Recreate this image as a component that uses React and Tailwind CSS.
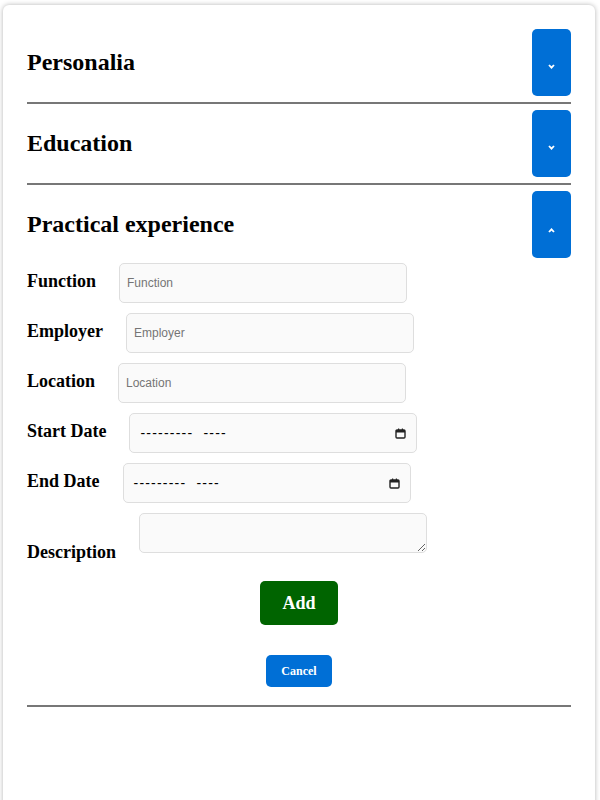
import { useState } from 'react';

const serif = { fontFamily: '"Liberation Serif", "Times New Roman", serif' };

function Chevron({ up }) {
  return (
    <svg
      width="7"
      height="5"
      viewBox="0 0 7 5"
      className={up ? 'mt-[12px]' : 'mt-[8px]'}
    >
      <path
        d={up ? 'M1 4 L3.5 1.3 L6 4' : 'M1 1 L3.5 3.7 L6 1'}
        fill="none"
        stroke="white"
        strokeWidth="1.8"
      />
    </svg>
  );
}

function Section({ title, open, onToggle, children }) {
  return (
    <div>
      <div className="flex items-center justify-between">
        <h2 className="text-[24px] font-bold text-black mb-[2px]">{title}</h2>
        <button
          onClick={onToggle}
          className="w-[39px] h-[67px] rounded-[5px] bg-[#006fd6] flex items-center justify-center"
        >
          <Chevron up={open} />
        </button>
      </div>
      {open && children}
      <div className="h-[2px] bg-[#777777] my-[6px]" />
    </div>
  );
}

function CalendarIcon() {
  return (
    <svg width="11" height="11" viewBox="0 0 11 11">
      <rect x="1" y="2" width="9" height="8" rx="1" fill="none" stroke="#222" strokeWidth="1.4" />
      <rect x="1" y="2" width="9" height="2.5" fill="#222" />
      <rect x="3" y="0.5" width="1.2" height="2" fill="#222" />
      <rect x="6.8" y="0.5" width="1.2" height="2" fill="#222" />
    </svg>
  );
}

const sans = { fontFamily: '"Liberation Sans", Arial, sans-serif' };

const inputCls =
  'w-[288px] h-[40px] rounded-[5px] border border-[#dedede] bg-[#fafafa] px-[7px] text-[12px] text-black placeholder:text-[#757575] outline-none';

function TextRow({ label }) {
  return (
    <div className="flex items-center gap-[23px]">
      <label className="text-[18px] font-bold mb-[3px]">{label}</label>
      <input placeholder={label} className={inputCls} style={sans} />
    </div>
  );
}

function DateRow({ label }) {
  return (
    <div className="flex items-center gap-[23px]">
      <label className="text-[18px] font-bold mb-[3px]">{label}</label>
      <div className="w-[288px] h-[40px] rounded-[5px] border border-[#dedede] bg-[#fafafa] px-[10px] flex items-center justify-between">
        <span className="text-[14px] text-black tracking-[1.2px] whitespace-pre" style={sans}>
          {'---------  ----'}
        </span>
        <CalendarIcon />
      </div>
    </div>
  );
}

export default function App() {
  const [open, setOpen] = useState({ personalia: false, education: false, practical: true });
  const toggle = (k) => setOpen((o) => ({ ...o, [k]: !o[k] }));

  return (
    <div className="min-h-[800px] bg-white pt-[5px] pl-[3px] pr-[5px] overflow-hidden" style={serif}>
      <div className="bg-white rounded-[6px] shadow-[0_0_5px_rgba(0,0,0,0.3)] px-[24px] pt-[24px] min-h-[810px]">
        <Section title="Personalia" open={open.personalia} onToggle={() => toggle('personalia')} />
        <Section title="Education" open={open.education} onToggle={() => toggle('education')} />
        <Section title="Practical experience" open={open.practical} onToggle={() => toggle('practical')}>
          <form className="flex flex-col gap-[10px] pt-[5px]" onSubmit={(e) => e.preventDefault()}>
            <TextRow label="Function" />
            <TextRow label="Employer" />
            <TextRow label="Location" />
            <DateRow label="Start Date" />
            <DateRow label="End Date" />
            <div className="flex items-end gap-[23px]">
              <label className="text-[18px] font-bold leading-none mb-[-8px]">Description</label>
              <textarea className="w-[288px] h-[40px] rounded-[5px] border border-[#dedede] bg-[#fafafa] outline-none" />
            </div>
            <div className="flex justify-center mt-[18px]">
              <button className="w-[78px] h-[44px] rounded-[5px] bg-[#006400] text-white text-[18px] font-bold">
                Add
              </button>
            </div>
            <div className="flex justify-center mt-[20px] mb-[12px]">
              <button className="w-[66px] h-[32px] rounded-[5px] bg-[#006fd6] text-white text-[12px] font-bold">
                Cancel
              </button>
            </div>
          </form>
        </Section>
      </div>
    </div>
  );
}
